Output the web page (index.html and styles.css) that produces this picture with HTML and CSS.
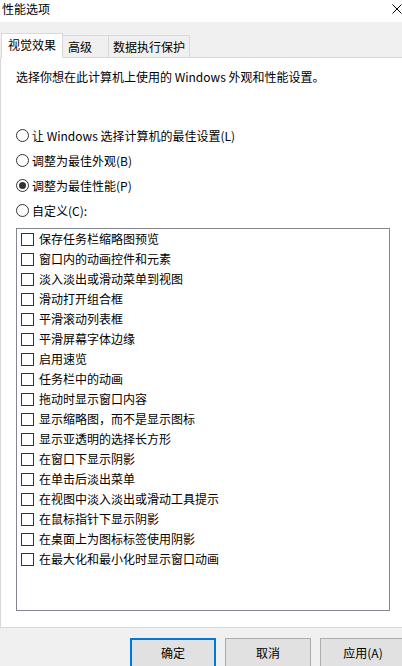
FILE: index.html
```html
<!DOCTYPE html>
<html lang="zh-CN">
<head>
  <meta charset="UTF-8">
  <meta name="viewport" content="width=device-width, initial-scale=1.0">
  <title>性能选项</title>
  <link rel="stylesheet" href="styles.css">
</head>
<body>
  <div class="titlebar">
    <span class="title">性能选项</span>
    <svg class="close" width="10" height="10" viewBox="0 0 10 10">
      <path d="M0.5 0.5 L9.5 9.5 M9.5 0.5 L0.5 9.5" stroke="#000" stroke-width="1" fill="none"/>
    </svg>
  </div>

  <div class="tabs">
    <div class="tab active">视觉效果</div>
    <div class="tab tab-adv">高级</div>
    <div class="tab tab-dep">数据执行保护</div>
  </div>

  <div class="panel">
    <p class="intro">选择你想在此计算机上使用的 Windows 外观和性能设置。</p>

    <div class="radios">
      <div class="radio-row"><span class="radio"></span>让 Windows 选择计算机的最佳设置(L)</div>
      <div class="radio-row"><span class="radio"></span>调整为最佳外观(B)</div>
      <div class="radio-row"><span class="radio checked"></span>调整为最佳性能(P)</div>
      <div class="radio-row"><span class="radio"></span>自定义(C):</div>
    </div>

    <div class="listbox">
      <div class="check-row"><span class="box"></span>保存任务栏缩略图预览</div>
      <div class="check-row"><span class="box"></span>窗口内的动画控件和元素</div>
      <div class="check-row"><span class="box"></span>淡入淡出或滑动菜单到视图</div>
      <div class="check-row"><span class="box"></span>滑动打开组合框</div>
      <div class="check-row"><span class="box"></span>平滑滚动列表框</div>
      <div class="check-row"><span class="box"></span>平滑屏幕字体边缘</div>
      <div class="check-row"><span class="box"></span>启用速览</div>
      <div class="check-row"><span class="box"></span>任务栏中的动画</div>
      <div class="check-row"><span class="box"></span>拖动时显示窗口内容</div>
      <div class="check-row"><span class="box"></span>显示缩略图，而不是显示图标</div>
      <div class="check-row"><span class="box"></span>显示亚透明的选择长方形</div>
      <div class="check-row"><span class="box"></span>在窗口下显示阴影</div>
      <div class="check-row"><span class="box"></span>在单击后淡出菜单</div>
      <div class="check-row"><span class="box"></span>在视图中淡入淡出或滑动工具提示</div>
      <div class="check-row"><span class="box"></span>在鼠标指针下显示阴影</div>
      <div class="check-row"><span class="box"></span>在桌面上为图标标签使用阴影</div>
      <div class="check-row"><span class="box"></span>在最大化和最小化时显示窗口动画</div>
    </div>
  </div>

  <div class="buttons">
    <button class="btn default">确定</button>
    <button class="btn">取消</button>
    <button class="btn">应用(A)</button>
  </div>
</body>
</html>
```

FILE: styles.css
```css
body {
  margin: 0;
  background: #f0f0f0;
  color: #000;
  font-family: "Noto Sans CJK SC", "Noto Sans", sans-serif;
  font-size: 12px;
  line-height: 16px;
  overflow: hidden;
}

.titlebar {
  height: 22px;
  background: #fff;
  display: flex;
  justify-content: space-between;
  align-items: flex-start;
}

.title {
  margin-left: 2px;
  margin-top: 1px;
}

.close {
  margin-top: 4px;
  margin-right: 0;
}

.tabs {
  display: flex;
  align-items: flex-end;
  padding-top: 11px;
  padding-left: 1px;
}

.tab {
  box-sizing: border-box;
  height: 22px;
  border: 1px solid #d9d9d9;
  border-bottom: none;
  border-left: none;
  background: #f0f0f0;
  text-align: center;
  line-height: 21px;
}

.tab.active {
  width: 62px;
  height: 25px;
  margin-bottom: -1px;
  border-left: 1px solid #d9d9d9;
  background: #fff;
  line-height: 22px;
  position: relative;
  z-index: 1;
}

.tab-adv {
  width: 46px;
  text-align: left;
  padding-left: 5px;
}

.tab-dep {
  width: 82px;
  border-left: 1px solid #d9d9d9;
  margin-left: -1px;
}

.panel {
  box-sizing: border-box;
  height: 571px;
  background: #fff;
  border: 1px solid #d9d9d9;
  border-right: none;
  padding: 11px 0 0 15px;
}

.intro {
  margin: 0;
  line-height: 16px;
}

.radios {
  margin-top: 38px;
}

.radio-row {
  display: flex;
  align-items: center;
  height: 25px;
}

.radio {
  box-sizing: border-box;
  width: 13px;
  height: 13px;
  border: 1px solid #333;
  border-radius: 50%;
  margin-right: 3px;
  display: flex;
  align-items: center;
  justify-content: center;
}

.radio.checked::after {
  content: "";
  width: 7px;
  height: 7px;
  border-radius: 50%;
  background: #333;
}

.listbox {
  box-sizing: border-box;
  width: 374px;
  height: 383px;
  margin-top: 5px;
  border: 1px solid #828790;
  padding-left: 4px;
}

.check-row {
  display: flex;
  align-items: center;
  height: 20px;
}

.box {
  box-sizing: border-box;
  width: 13px;
  height: 13px;
  border: 1px solid #333;
  margin-right: 5px;
}

.buttons {
  display: flex;
  gap: 9px;
  padding: 10px 0 0 130px;
}

.btn {
  box-sizing: border-box;
  flex: none;
  width: 86px;
  height: 30px;
  padding: 0;
  background: #e1e1e1;
  border: 1px solid #adadad;
  font-family: inherit;
  font-size: 12px;
  line-height: 24px;
  color: #000;
  vertical-align: top;
}

.btn.default {
  border: 2px solid #0078d7;
  line-height: 22px;
}
```
